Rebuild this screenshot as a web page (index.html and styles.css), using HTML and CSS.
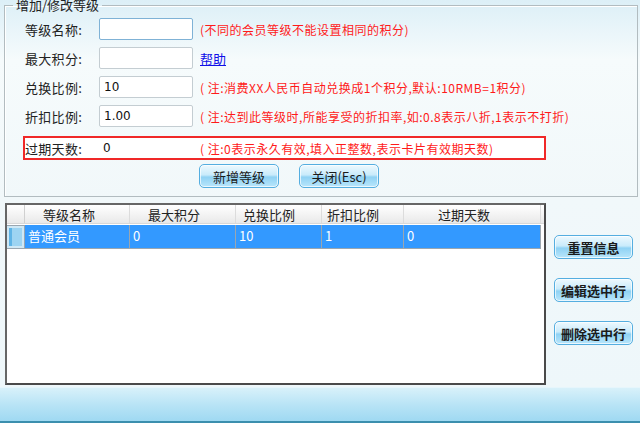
FILE: index.html
```html
<!DOCTYPE html>
<html lang="zh-CN">
<head>
  <meta charset="UTF-8" />
  <title>会员等级设置</title>
  <link rel="stylesheet" href="styles.css">
</head>
<body>
  <fieldset class="edit">
    <legend>增加/修改等级</legend>
    <div class="row">
      <label>等级名称:</label>
      <input type="text" value="" class="focus" />
      <span class="note">(不同的会员等级不能设置相同的积分)</span>
    </div>
    <div class="row">
      <label>最大积分:</label>
      <input type="text" value="" />
      <a href="#" class="help">帮助</a>
    </div>
    <div class="row">
      <label>兑换比例:</label>
      <input type="text" value="10" />
      <span class="note">( 注:消费XX人民币自动兑换成1个积分,默认:10RMB=1积分)</span>
    </div>
    <div class="row">
      <label>折扣比例:</label>
      <input type="text" value="1.00" />
      <span class="note">( 注:达到此等级时,所能享受的折扣率,如:0.8表示八折,1表示不打折)</span>
    </div>
    <div class="row mark">
      <label>过期天数:</label>
      <input type="text" value="0" class="flat" />
      <span class="note">( 注:0表示永久有效,填入正整数,表示卡片有效期天数)</span>
    </div>
    <div class="actions">
      <button class="btn">新增等级</button>
      <button class="btn">关闭(Esc)</button>
    </div>
  </fieldset>

  <div class="main">
    <div class="grid">
      <div class="grid-head">
        <div class="rh"></div>
        <div class="c c1">等级名称</div>
        <div class="c c2">最大积分</div>
        <div class="c c3">兑换比例</div>
        <div class="c c4">折扣比例</div>
        <div class="c c5">过期天数</div>
      </div>
      <div class="grid-row selected">
        <div class="rh"><span></span></div>
        <div class="c c1">普通会员</div>
        <div class="c c2">0</div>
        <div class="c c3">10</div>
        <div class="c c4">1</div>
        <div class="c c5">0</div>
      </div>
    </div>
    <div class="side">
      <button class="btn wide">重置信息</button>
      <button class="btn wide">编辑选中行</button>
      <button class="btn wide">删除选中行</button>
    </div>
  </div>

  <div class="statusbar"></div>
</body>
</html>
```

FILE: styles.css
```css
* {
  box-sizing: border-box;
}
html, body {
  margin: 0;
  padding: 0;
}
body {
  width: 640px;
  height: 423px;
  overflow: hidden;
  display: flex;
  flex-direction: column;
  font-family: "Noto Sans CJK SC", "DejaVu Sans", sans-serif;
  font-size: 13px;
  color: #222;
  background: linear-gradient(to bottom, #dceff7 0px, #f6fbfc 60px, #f1f8fa 200px, #eef7fa 385px);
}

/* top edit box */
.edit {
  margin: -2px 2px 0 4px;
  height: 199px;
  padding: 6px 0 0 20px;
  border: 1px solid #b2bcc0;
  box-shadow: inset 1px 1px 0 #fff;
  min-width: 0;
}
.edit legend {
  margin-left: -12px;
  padding: 0 3px;
  font-size: 13px;
  line-height: 14px;
  color: #222;
}
.row {
  display: flex;
  align-items: center;
  height: 22px;
  margin-bottom: 7px;
}
.row label {
  width: 74px;
  flex: none;
  white-space: nowrap;
  letter-spacing: 0.3px;
}
.row input {
  width: 94px;
  height: 22px;
  flex: none;
  margin: 0;
  padding: 0 4px;
  border: 1px solid #c4cdd2;
  border-radius: 2px;
  background: #fff;
  font-family: "DejaVu Sans", sans-serif;
  font-size: 12px;
  color: #111;
}
.row input.focus {
  border-color: #7fb2d6;
}
.row input.flat {
  border: none;
  height: 20px;
}
.note {
  margin-left: 7px;
  color: #ff1a1a;
  font-size: 12px;
  letter-spacing: 0.5px;
  white-space: nowrap;
}
.help {
  margin-left: 7px;
  color: #1010e8;
  text-decoration: underline;
}
.row.mark {
  width: 523px;
  height: 24px;
  margin-left: -2px;
  margin-top: 9px;
  margin-bottom: 4px;
  border: 2px solid #f02828;
  background: #fff;
}
.actions {
  display: flex;
  gap: 20px;
  padding-left: 174px;
}

.btn {
  height: 24px;
  width: 80px;
  padding: 0;
  border: 1px solid #55aee0;
  border-radius: 5px;
  background: linear-gradient(to bottom, #eef9fe 0%, #c9ebfb 45%, #8fd2f4 55%, #b9e6fb 100%);
  box-shadow: inset 0 0 0 1px rgba(255, 255, 255, 0.7);
  font-family: "Noto Sans CJK SC", sans-serif;
  font-size: 13px;
  color: #1b1b1b;
  cursor: pointer;
}

/* table + side buttons */
.main {
  display: flex;
  margin-top: 6px;
  height: 182px;
}
.grid {
  width: 541px;
  height: 182px;
  margin-left: 5px;
  border: 2px solid #4a4a4a;
  border-top-color: #666;
  border-left-color: #666;
  background: #fff;
}
.grid-head, .grid-row {
  display: flex;
}
.grid-head {
  height: 19px;
  line-height: 19px;
  background: linear-gradient(to bottom, #ffffff, #f4f4f4 50%, #e9e9e9);
  border-bottom: 1px solid #d8d8d8;
}
.grid-head .c {
  border-right: 1px solid #dcdcdc;
  color: #222;
}
.rh {
  width: 18px;
  flex: none;
  border-right: 1px solid #d0d0d0;
}
.c {
  overflow: hidden;
  white-space: nowrap;
}
.c1 { width: 105px; padding-left: 18px; }
.c2 { width: 106px; padding-left: 18px; }
.c3 { width: 86px; padding-left: 7px; }
.c4 { width: 82px; padding-left: 5px; }
.c5 { width: 137px; padding-left: 34px; }

.grid-row {
  height: 24px;
  line-height: 22px;
  margin-top: 1px;
}
.grid-row .c {
  padding-left: 3px;
  border-right: 1px solid #9aa6b0;
  border-bottom: 1px solid #9aa6b0;
}
.grid-row.selected .c {
  background: #3399ff;
  color: #fff;
}
.grid-row .rh {
  padding: 2px;
  background: #cfe8f5;
  border: 1px solid #9aa6b0;
  border-left: none;
}
.grid-row .rh span {
  display: block;
  height: 100%;
  border-left: 3px solid #5fb4e6;
  background: #9dd4f2;
}

.side {
  display: flex;
  flex-direction: column;
  gap: 19px;
  padding-top: 32px;
  margin-left: 8px;
}
.btn.wide {
  width: 79px;
  font-weight: 600;
}

.statusbar {
  margin-top: 2px;
  flex: 1;
  background: linear-gradient(to bottom, #d8f1fa, #b9e4f6 50%, #9fd9f2);
  border-top: 1px solid #e6f6fc;
  border-bottom: 2px solid #3b8fae;
}
```
